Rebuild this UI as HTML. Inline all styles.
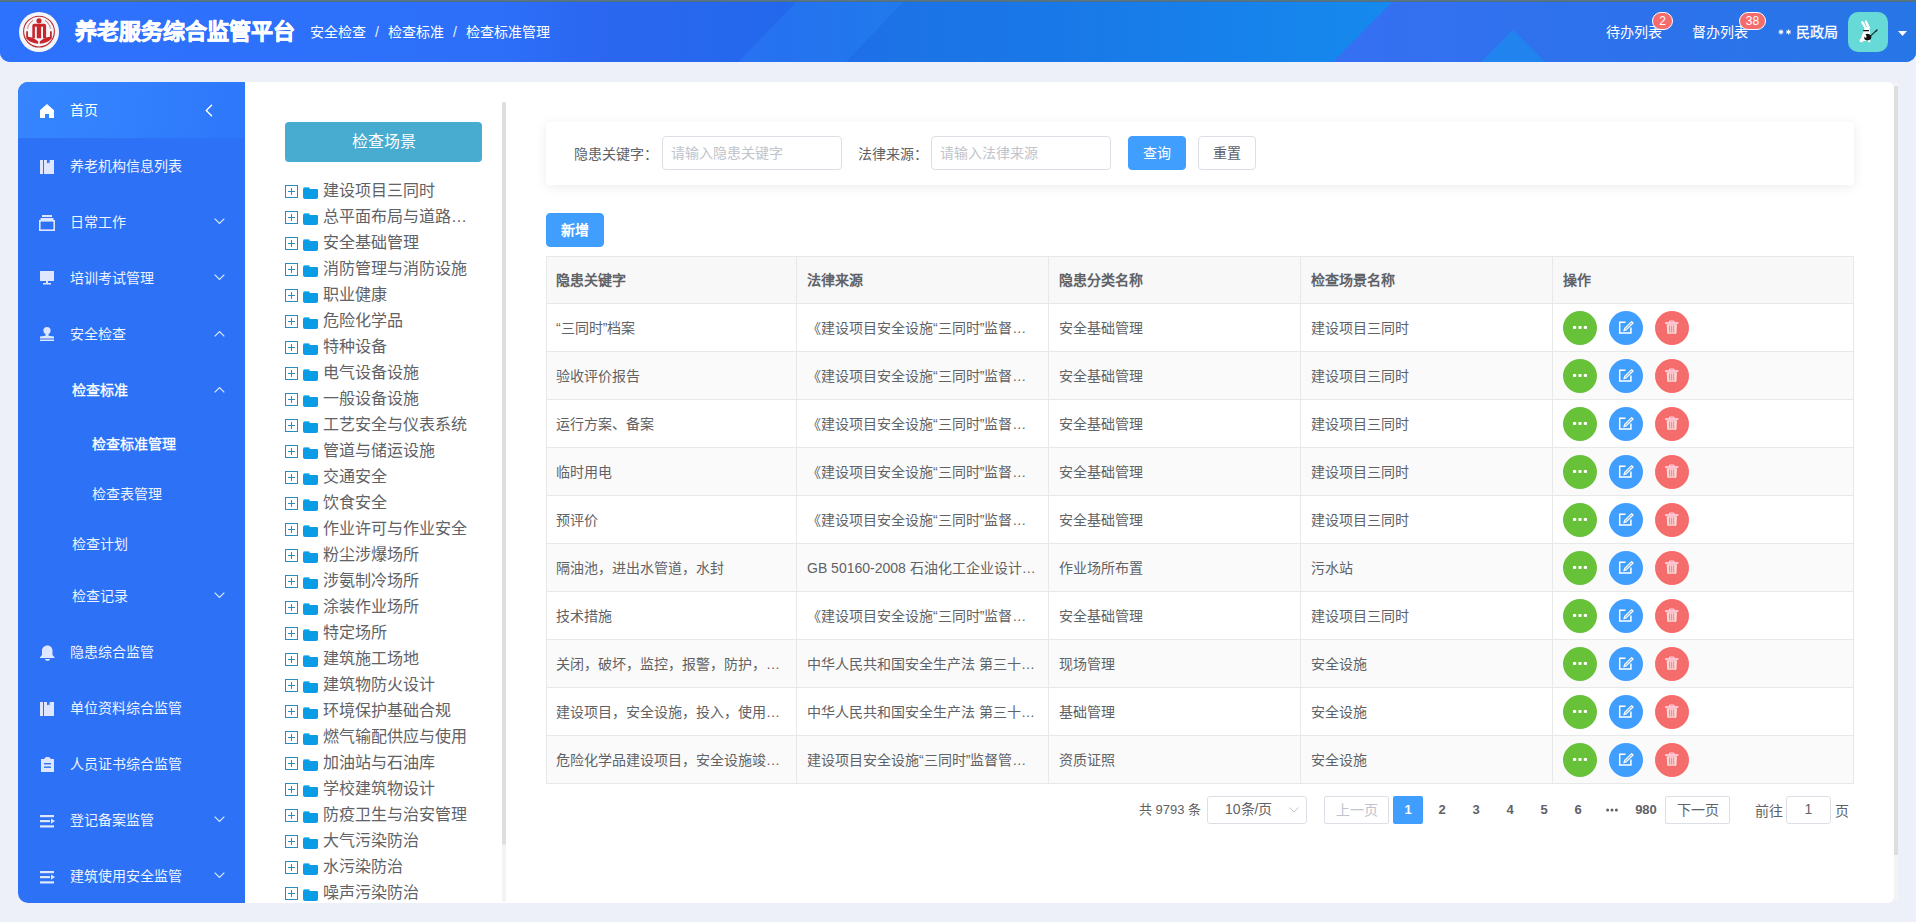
<!DOCTYPE html><html lang="zh-CN"><head><meta charset="utf-8"><style>*{box-sizing:border-box;margin:0;padding:0}
html,body{width:1916px;height:922px;overflow:hidden}
body{background:#edf0f8;font-family:"Liberation Sans",sans-serif;position:relative;color:#606266}
.abs{position:absolute}
#hdr{position:absolute;left:0;top:0;width:1916px;height:62px;border-radius:0 0 10px 10px;overflow:hidden;
 background:linear-gradient(90deg,#2d72fd 0px,#2c70fb 500px,#2169ee 800px,#1a82ea 1150px,#1c86ec 1300px,#2a73f4 1450px,#2d70f3 1916px)}
#topline{position:absolute;left:0;top:0;width:1916px;height:2px;background:linear-gradient(180deg,#5f7a78 0,#4a6a90 100%)}
#hdr .tri{position:absolute}
.logo{position:absolute;left:19px;top:12px;width:40px;height:40px}
.title{position:absolute;left:75px;top:17px;font-size:22px;line-height:30px;font-weight:bold;color:#fff;letter-spacing:0;-webkit-text-stroke:0.7px #fff}
.bc{position:absolute;top:23px;font-size:14px;line-height:18px;color:#fff}
.hr{position:absolute;top:23px;font-size:14px;line-height:18px;color:#fff}
.badge{position:absolute;height:18px;border-radius:9px;background:#f56c6c;border:1px solid #fff;color:#fff;font-size:12px;line-height:16px;text-align:center;padding:0 5px}
.avatar{position:absolute;left:1848px;top:12px;width:40px;height:40px;border-radius:10px;background:#67d9d6;overflow:hidden}
#side{position:absolute;left:18px;top:82px;width:227px;height:821px;background:#2d71f7;border-radius:10px 0 0 10px;overflow:hidden}
.mi{position:absolute;left:0;width:227px;color:#fff;font-size:14px}
.mi .tx{position:absolute;top:0;line-height:20px}
.home{background:linear-gradient(100deg,#3685ff 0%,#3280fd 50%,#2d77fb 100%)}
#panel{position:absolute;left:245px;top:82px;width:1649px;height:821px;background:#fff;border-radius:0 6px 6px 0}
.sb{position:absolute;background:#dedede;border-radius:2px}
.sbt{position:absolute;background:#f4f4f4}
.scene{position:absolute;left:285px;top:122px;width:197px;height:40px;border-radius:4px;background:#48abd0;color:#fff;font-size:16px;line-height:40px;text-align:center}
.tree{position:absolute;left:245px;top:82px;width:260px;height:821px;overflow:hidden}
.ti{position:absolute;left:0;height:26px;width:260px}
.ti .pl{position:absolute;left:40px;top:8px;width:13px;height:13px;border:1px solid #2a8cb8}
.ti .pl:before{content:"";position:absolute;left:2px;top:5px;width:7px;height:1px;background:#2a8cb8}
.ti .pl:after{content:"";position:absolute;left:5px;top:2px;width:1px;height:7px;background:#2a8cb8}
.ti .fd{position:absolute;left:58px;top:12px;width:15px;height:10px;background:#0a9de5;border-radius:0 1px 2px 2px}
.ti .fd:before{content:"";position:absolute;left:0;top:-2px;width:7px;height:3px;background:#0a9de5;border-radius:2px 2px 0 0;border-top:1px solid #5cc4f5}
.ti .tt{position:absolute;left:78px;top:3px;font-size:16px;line-height:22px;color:#606266;white-space:nowrap}
.card{position:absolute;left:546px;top:122px;width:1308px;height:63px;background:#fff;border-radius:4px;box-shadow:0 2px 12px 0 rgba(0,0,0,.08)}
.lbl{position:absolute;font-size:14px;line-height:20px;color:#606266}
.inp{position:absolute;height:34px;border:1px solid #dcdfe6;border-radius:4px;background:#fff;font-size:14px;color:#c0c4cc;line-height:32px;padding-left:8px}
.btn{position:absolute;height:34px;border-radius:4px;font-size:14px;line-height:32px;text-align:center}
.bp{background:#409eff;border:1px solid #409eff;color:#fff}
.bd{background:#fff;border:1px solid #dcdfe6;color:#606266}
.tbl{position:absolute;left:546px;top:256px;width:1308px;height:528px;border:1px solid #e8e8e8}
.th{position:absolute;left:546px;top:256px;width:1308px;height:48px;background:#f8f8f9;border:1px solid #e8e8e8;border-bottom:1px solid #e8e8e8}
.th div{position:absolute;top:13px;font-size:14px;line-height:20px;font-weight:bold;color:#606266}
.tr{position:absolute;left:546px;width:1308px;height:48px;border:1px solid #e8e8e8;border-top:none;background:#fff}
.tr.st{background:#fafafa}
.td{position:absolute;top:14px;font-size:14px;line-height:20px;color:#606266;white-space:nowrap}
.c0{left:9px}.c1{left:260px}.c2{left:512px}.c3{left:764px}
.vl{position:absolute;width:1px;background:#e8e8e8}
.ops{position:absolute;left:1016px;top:7px;height:34px}
.ob{position:absolute;top:0;width:34px;height:34px;border-radius:17px}
.ob.g{left:0;background:#67c23a}.ob.b{left:46px;background:#409eff}.ob.r{left:92px;background:#f56c6c}
.pg{position:absolute;font-size:13px;line-height:28px;color:#606266}
</style></head><body>
<div id="hdr">
 <svg class="tri" style="left:0;top:0" width="1916" height="62">
  <defs>
   <linearGradient id="g1" x1="0" x2="1916" y1="0" y2="0" gradientUnits="userSpaceOnUse">
    <stop offset="0" stop-color="#2d72fd"/><stop offset="0.26" stop-color="#2d6ff9"/><stop offset="0.31" stop-color="#2b67f0"/>
    <stop offset="0.41" stop-color="#2368ec"/><stop offset="0.47" stop-color="#1c73e6"/><stop offset="0.55" stop-color="#1978e7"/><stop offset="0.72" stop-color="#1589ee"/><stop offset="1" stop-color="#1589ee"/>
   </linearGradient>
   <linearGradient id="g2" x1="1333" x2="1916" y1="0" y2="0" gradientUnits="userSpaceOnUse">
    <stop offset="0" stop-color="#3570f2"/><stop offset="0.5" stop-color="#2d72ec"/><stop offset="1" stop-color="#2776e6"/>
   </linearGradient>
  </defs>
  <rect x="0" y="0" width="1916" height="62" fill="url(#g1)"/>
  <polygon points="798,0 905,0 846,62 738,62" fill="#2a8cf8" opacity="0.3"/>
  <polygon points="1394,0 1916,0 1916,62 1333,62" fill="url(#g2)"/>
  <polygon points="1513,30 1481,62 1545,62" fill="#2083ee"/>
 </svg>
</div>
<div id="topline"></div>
<svg class="abs" style="left:17px;top:10px" width="44" height="44" viewBox="0 0 44 44">
 <circle cx="22" cy="22" r="20" fill="#f5f6fa"/>
 <circle cx="22" cy="21.6" r="15.4" fill="none" stroke="#bd2a2e" stroke-width="1.1"/>
 <circle cx="22" cy="10.8" r="2.6" fill="#c8262b"/>
 <path d="M15.3 28.2V15.8Q15.3 13.8 17.3 13.8H27.1Q29.1 13.8 29.1 15.8V28.2H26V16.7H24.1V28.2H19.8V16.7H17.9V28.2Z" fill="#c8262b"/>
 <path d="M9.2 21.3H11V26.8Q17 27.3 21.2 31.6V33.8Q14 33.6 9.2 28.6Z" fill="#c8262b"/>
 <path d="M34.8 21.3H33V26.8Q27 27.3 22.8 31.6V33.8Q30 33.6 34.8 28.6Z" fill="#c8262b"/>
 <path d="M10.5 18.5Q12 13 16 10.5" fill="none" stroke="#b5373a" stroke-width="1.3" stroke-dasharray="0.7 0.6" opacity="0.8"/>
 <path d="M33.5 18.5Q32 13 28 10.5" fill="none" stroke="#b5373a" stroke-width="1.3" stroke-dasharray="0.7 0.6" opacity="0.8"/>
</svg>
<div class="title">养老服务综合监管平台</div>
<div class="bc" style="left:310px">安全检查</div>
<div class="bc" style="left:375px;color:#e6eeff">/</div>
<div class="bc" style="left:388px">检查标准</div>
<div class="bc" style="left:453px;color:#e6eeff">/</div>
<div class="bc" style="left:466px">检查标准管理</div>
<div class="hr" style="left:1606px">待办列表</div>
<div class="badge" style="left:1652px;top:12px;width:21px">2</div>
<div class="hr" style="left:1692px">督办列表</div>
<div class="badge" style="left:1739px;top:12px;width:27px">38</div>
<svg class="abs" style="left:1778px;top:29px" width="14" height="6" viewBox="0 0 14 6"><path d="M3 0.5v5M0.8 1.8l4.4 2.4M0.8 4.2l4.4-2.4M10.5 0.5v5M8.3 1.8l4.4 2.4M8.3 4.2l4.4-2.4" stroke="#fff" stroke-width="1.1"/></svg>
<div class="hr" style="left:1796px;-webkit-text-stroke:0.3px #fff">民政局</div>
<div class="avatar"><svg width="40" height="40" viewBox="0 0 40 40">
 <path d="M14.2 10.2L17.6 15.8M17.8 9.6L20.8 15.8" stroke="#fff" stroke-width="2.4" stroke-linecap="round" fill="none"/>
 <path d="M17 15Q21.2 14.6 21.8 18Q22.5 22 22 26L22.3 30.2L20.3 30.3L19.5 28.5L15.5 29L14 30.4L11.5 29.5Q11 27.5 13 26.5Q14.5 21.5 16 17.5Z" fill="#fff"/>
 <path d="M15.2 18.6H21" stroke="#111" stroke-width="1.2"/>
 <path d="M17.5 22.2Q20.5 21 23.2 23.5Q24 26.5 21.5 28Q18.5 29 16.6 27.6Q15.8 25.8 16.6 24.4Q17.5 26.5 18.6 25.2Q18.5 23.4 17.5 22.2Z" fill="#111"/>
 <path d="M23 23.6L29.2 17.8" stroke="#163c3c" stroke-width="1.3"/>
 <path d="M27 19.6L29.8 17L28.6 19.4z" fill="#111"/>
</svg></div>
<svg class="abs" style="left:1898px;top:31px" width="9" height="5"><path d="M0 0h9L4.5 5z" fill="#fff"/></svg>

<div id="side">
<div class="mi home" style="top:0;height:56px"></div>
<div class="mi" style="top:28px;height:0"><svg class="abs" style="left:22px;top:-6px" width="14" height="14" viewBox="0 0 14 14"><path d="M7 0L14 6.2V14H9V9.9H5V14H0V6.2z" fill="#fff"/></svg><div class="tx" style="left:52px;top:-10px;color:#fff">首页</div><svg class="abs" style="left:187px;top:-6px" width="8" height="13" viewBox="0 0 8 13"><path d="M7 0.7L1.3 6.5L7 12.3" fill="none" stroke="#fff" stroke-width="1.4"/></svg></div>
<div class="mi" style="top:84px;height:0"><svg class="abs" style="left:22px;top:-6px" width="14" height="14" viewBox="0 0 14 14"><rect x="0" y="0" width="3" height="14" fill="#dfe6ff"/><path d="M4 0h3v3.5l1.3-1 1.3 1V0H14v14H4z" fill="#dfe6ff"/></svg><div class="tx" style="left:52px;top:-10px;color:#eef3ff">养老机构信息列表</div></div>
<div class="mi" style="top:140px;height:0"><svg class="abs" style="left:21px;top:-7px" width="16" height="16" viewBox="0 0 16 16"><rect x="3" y="0" width="10" height="2" fill="#dfe6ff"/><rect x="1.5" y="3" width="13" height="2" fill="#dfe6ff"/><rect x="0.8" y="5.8" width="14.4" height="9.4" fill="none" stroke="#dfe6ff" stroke-width="1.6"/></svg><div class="tx" style="left:52px;top:-10px;color:#eef3ff">日常工作</div><svg class="abs" style="left:196px;top:-4px" width="11" height="7" viewBox="0 0 11 7"><path d="M0.7 0.7L5.5 5.5L10.3 0.7" fill="none" stroke="#dfe8ff" stroke-width="1.2"/></svg></div>
<div class="mi" style="top:196px;height:0"><svg class="abs" style="left:22px;top:-7px" width="14" height="14" viewBox="0 0 14 14"><rect x="0" y="0" width="14" height="10" fill="#dfe6ff"/><rect x="6" y="10" width="2" height="2" fill="#dfe6ff"/><rect x="3" y="12" width="8" height="1.5" fill="#dfe6ff"/></svg><div class="tx" style="left:52px;top:-10px;color:#eef3ff">培训考试管理</div><svg class="abs" style="left:196px;top:-4px" width="11" height="7" viewBox="0 0 11 7"><path d="M0.7 0.7L5.5 5.5L10.3 0.7" fill="none" stroke="#dfe8ff" stroke-width="1.2"/></svg></div>
<div class="mi" style="top:252px;height:0"><svg class="abs" style="left:22px;top:-7px" width="14" height="14" viewBox="0 0 14 14"><circle cx="7" cy="3.6" r="3.6" fill="#dfe6ff"/><path d="M5.5 6.5h3v2.2L14 9.5V11.5H0V9.5l5.5-0.8z" fill="#dfe6ff"/><rect x="0" y="12.5" width="14" height="1.5" fill="#dfe6ff"/></svg><div class="tx" style="left:52px;top:-10px;color:#eef3ff">安全检查</div><svg class="abs" style="left:196px;top:-4px" width="11" height="7" viewBox="0 0 11 7"><path d="M0.7 6.3L5.5 1.5L10.3 6.3" fill="none" stroke="#dfe8ff" stroke-width="1.2"/></svg></div>
<div class="mi" style="top:308px;height:0"><div class="tx" style="left:54px;top:-10px;-webkit-text-stroke:0.35px #fff;color:#fff">检查标准</div><svg class="abs" style="left:196px;top:-4px" width="11" height="7" viewBox="0 0 11 7"><path d="M0.7 6.3L5.5 1.5L10.3 6.3" fill="none" stroke="#dfe8ff" stroke-width="1.2"/></svg></div>
<div class="mi" style="top:362px;height:0"><div class="tx" style="left:74px;top:-10px;-webkit-text-stroke:0.35px #fff;color:#fff">检查标准管理</div></div>
<div class="mi" style="top:412px;height:0"><div class="tx" style="left:74px;top:-10px;color:#eef3ff">检查表管理</div></div>
<div class="mi" style="top:462px;height:0"><div class="tx" style="left:54px;top:-10px;color:#eef3ff">检查计划</div></div>
<div class="mi" style="top:514px;height:0"><div class="tx" style="left:54px;top:-10px;color:#eef3ff">检查记录</div><svg class="abs" style="left:196px;top:-4px" width="11" height="7" viewBox="0 0 11 7"><path d="M0.7 0.7L5.5 5.5L10.3 0.7" fill="none" stroke="#dfe8ff" stroke-width="1.2"/></svg></div>
<div class="mi" style="top:570px;height:0"><svg class="abs" style="left:22px;top:-7px" width="15" height="16" viewBox="0 0 15 16"><path d="M7.5 0.5c3 0 5 2.3 5 5.5v4l2 2.2v0.8H0v-0.8l2-2.2v-4c0-3.2 2-5.5 5.5-5.5z" fill="#dfe6ff"/><path d="M5 14h5c0 1-1 1.8-2.5 1.8S5 15 5 14z" fill="#dfe6ff"/></svg><div class="tx" style="left:52px;top:-10px;color:#eef3ff">隐患综合监管</div></div>
<div class="mi" style="top:626px;height:0"><svg class="abs" style="left:22px;top:-6px" width="14" height="14" viewBox="0 0 14 14"><rect x="0" y="0" width="3" height="14" fill="#dfe6ff"/><path d="M4 0h3v3.5l1.3-1 1.3 1V0H14v14H4z" fill="#dfe6ff"/></svg><div class="tx" style="left:52px;top:-10px;color:#eef3ff">单位资料综合监管</div></div>
<div class="mi" style="top:682px;height:0"><svg class="abs" style="left:23px;top:-7px" width="13" height="15" viewBox="0 0 13 15"><path d="M0 2h3.5V1h6v1H13v13H0z" fill="#dfe6ff"/><rect x="3" y="6" width="7" height="1.4" fill="#2d71f7"/><rect x="3" y="9.5" width="7" height="1.4" fill="#2d71f7"/><rect x="4.5" y="0" width="4" height="2.5" fill="#dfe6ff"/></svg><div class="tx" style="left:52px;top:-10px;color:#eef3ff">人员证书综合监管</div></div>
<div class="mi" style="top:738px;height:0"><svg class="abs" style="left:22px;top:-5px" width="15" height="13" viewBox="0 0 15 13"><rect x="0" y="0" width="14" height="2.2" fill="#dfe6ff"/><rect x="0" y="5" width="10" height="2.2" fill="#dfe6ff"/><path d="M11 3.5l4 2.6-4 2.6z" fill="#dfe6ff"/><rect x="0" y="10.3" width="14" height="2.2" fill="#dfe6ff"/></svg><div class="tx" style="left:52px;top:-10px;color:#eef3ff">登记备案监管</div><svg class="abs" style="left:196px;top:-4px" width="11" height="7" viewBox="0 0 11 7"><path d="M0.7 0.7L5.5 5.5L10.3 0.7" fill="none" stroke="#dfe8ff" stroke-width="1.2"/></svg></div>
<div class="mi" style="top:794px;height:0"><svg class="abs" style="left:22px;top:-5px" width="15" height="13" viewBox="0 0 15 13"><rect x="0" y="0" width="14" height="2.2" fill="#dfe6ff"/><rect x="0" y="5" width="10" height="2.2" fill="#dfe6ff"/><path d="M11 3.5l4 2.6-4 2.6z" fill="#dfe6ff"/><rect x="0" y="10.3" width="14" height="2.2" fill="#dfe6ff"/></svg><div class="tx" style="left:52px;top:-10px;color:#eef3ff">建筑使用安全监管</div><svg class="abs" style="left:196px;top:-4px" width="11" height="7" viewBox="0 0 11 7"><path d="M0.7 0.7L5.5 5.5L10.3 0.7" fill="none" stroke="#dfe8ff" stroke-width="1.2"/></svg></div>
</div>
<div id="panel"></div>
<div class="scene">检查场景</div>

<div class="sbt" style="left:502px;top:102px;width:4px;height:800px"></div><div class="sb" style="left:502px;top:102px;width:4px;height:743px"></div>
<div class="sbt" style="left:1894px;top:82px;width:4px;height:818px"></div>
<div class="sb" style="left:1894px;top:86px;width:4px;height:769px;border-radius:0"></div>
<div class="card">
 <div class="lbl" style="left:28px;top:22px">隐患关键字：</div>
 <div class="inp" style="left:116px;top:14px;width:180px">请输入隐患关键字</div>
 <div class="lbl" style="left:312px;top:22px">法律来源：</div>
 <div class="inp" style="left:385px;top:14px;width:180px">请输入法律来源</div>
 <div class="btn bp" style="left:582px;top:14px;width:58px">查询</div>
 <div class="btn bd" style="left:652px;top:14px;width:58px">重置</div>
</div>
<div class="btn bp" style="left:546px;top:213px;width:58px;font-weight:bold">新增</div>
<div class="th"><div style="left:9px">隐患关键字</div><div style="left:260px">法律来源</div><div style="left:512px">隐患分类名称</div><div style="left:764px">检查场景名称</div><div style="left:1016px">操作</div></div>

<div class="tree">
<div class="ti" style="top:95px"><span class="pl"></span><span class="fd"></span><span class="tt">建设项目三同时</span></div>
<div class="ti" style="top:121px"><span class="pl"></span><span class="fd"></span><span class="tt">总平面布局与道路…</span></div>
<div class="ti" style="top:147px"><span class="pl"></span><span class="fd"></span><span class="tt">安全基础管理</span></div>
<div class="ti" style="top:173px"><span class="pl"></span><span class="fd"></span><span class="tt">消防管理与消防设施</span></div>
<div class="ti" style="top:199px"><span class="pl"></span><span class="fd"></span><span class="tt">职业健康</span></div>
<div class="ti" style="top:225px"><span class="pl"></span><span class="fd"></span><span class="tt">危险化学品</span></div>
<div class="ti" style="top:251px"><span class="pl"></span><span class="fd"></span><span class="tt">特种设备</span></div>
<div class="ti" style="top:277px"><span class="pl"></span><span class="fd"></span><span class="tt">电气设备设施</span></div>
<div class="ti" style="top:303px"><span class="pl"></span><span class="fd"></span><span class="tt">一般设备设施</span></div>
<div class="ti" style="top:329px"><span class="pl"></span><span class="fd"></span><span class="tt">工艺安全与仪表系统</span></div>
<div class="ti" style="top:355px"><span class="pl"></span><span class="fd"></span><span class="tt">管道与储运设施</span></div>
<div class="ti" style="top:381px"><span class="pl"></span><span class="fd"></span><span class="tt">交通安全</span></div>
<div class="ti" style="top:407px"><span class="pl"></span><span class="fd"></span><span class="tt">饮食安全</span></div>
<div class="ti" style="top:433px"><span class="pl"></span><span class="fd"></span><span class="tt">作业许可与作业安全</span></div>
<div class="ti" style="top:459px"><span class="pl"></span><span class="fd"></span><span class="tt">粉尘涉爆场所</span></div>
<div class="ti" style="top:485px"><span class="pl"></span><span class="fd"></span><span class="tt">涉氨制冷场所</span></div>
<div class="ti" style="top:511px"><span class="pl"></span><span class="fd"></span><span class="tt">涂装作业场所</span></div>
<div class="ti" style="top:537px"><span class="pl"></span><span class="fd"></span><span class="tt">特定场所</span></div>
<div class="ti" style="top:563px"><span class="pl"></span><span class="fd"></span><span class="tt">建筑施工场地</span></div>
<div class="ti" style="top:589px"><span class="pl"></span><span class="fd"></span><span class="tt">建筑物防火设计</span></div>
<div class="ti" style="top:615px"><span class="pl"></span><span class="fd"></span><span class="tt">环境保护基础合规</span></div>
<div class="ti" style="top:641px"><span class="pl"></span><span class="fd"></span><span class="tt">燃气输配供应与使用</span></div>
<div class="ti" style="top:667px"><span class="pl"></span><span class="fd"></span><span class="tt">加油站与石油库</span></div>
<div class="ti" style="top:693px"><span class="pl"></span><span class="fd"></span><span class="tt">学校建筑物设计</span></div>
<div class="ti" style="top:719px"><span class="pl"></span><span class="fd"></span><span class="tt">防疫卫生与治安管理</span></div>
<div class="ti" style="top:745px"><span class="pl"></span><span class="fd"></span><span class="tt">大气污染防治</span></div>
<div class="ti" style="top:771px"><span class="pl"></span><span class="fd"></span><span class="tt">水污染防治</span></div>
<div class="ti" style="top:797px"><span class="pl"></span><span class="fd"></span><span class="tt">噪声污染防治</span></div>
</div>
<div class="tr" style="top:304px">
<div class="td c0">“三同时”档案</div>
<div class="td c1">《建设项目安全设施“三同时”监督…</div>
<div class="td c2">安全基础管理</div>
<div class="td c3">建设项目三同时</div>
<div class="ops"><span class="ob g"><svg width="34" height="34" viewBox="0 0 34 34"><rect x="10" y="15" width="3.2" height="3" rx="0.8" fill="#fff"/><rect x="15.4" y="15" width="3.2" height="3" rx="0.8" fill="#fff"/><rect x="20.8" y="15" width="3.2" height="3" rx="0.8" fill="#fff"/></svg></span><span class="ob b"><svg width="34" height="34" viewBox="0 0 34 34"><path d="M16.5 11.2H10.7V22H21.9V16.5" fill="none" stroke="#fff" stroke-width="1.5"/><path d="M22.6 10.6l1.4 1.4-6.9 6.9-2.2 0.8 0.8-2.2z" fill="none" stroke="#fff" stroke-width="1.2" stroke-linejoin="round"/></svg></span><span class="ob r"><svg width="34" height="34" viewBox="0 0 34 34"><rect x="10" y="11.2" width="13.4" height="1.6" fill="#fde" /><path d="M14.5 11.2v-1.2h4.4v1.2" fill="none" stroke="#fde" stroke-width="1"/><path d="M11.7 13.3h10.2l-0.5 9.5H12.2z" fill="#fcd8d8"/><rect x="14.2" y="14.6" width="1" height="7" fill="#f08080"/><rect x="16.2" y="14.6" width="1" height="7" fill="#f08080"/><rect x="18.2" y="14.6" width="1" height="7" fill="#f08080"/></svg></span></div>
</div>
<div class="tr st" style="top:352px">
<div class="td c0">验收评价报告</div>
<div class="td c1">《建设项目安全设施“三同时”监督…</div>
<div class="td c2">安全基础管理</div>
<div class="td c3">建设项目三同时</div>
<div class="ops"><span class="ob g"><svg width="34" height="34" viewBox="0 0 34 34"><rect x="10" y="15" width="3.2" height="3" rx="0.8" fill="#fff"/><rect x="15.4" y="15" width="3.2" height="3" rx="0.8" fill="#fff"/><rect x="20.8" y="15" width="3.2" height="3" rx="0.8" fill="#fff"/></svg></span><span class="ob b"><svg width="34" height="34" viewBox="0 0 34 34"><path d="M16.5 11.2H10.7V22H21.9V16.5" fill="none" stroke="#fff" stroke-width="1.5"/><path d="M22.6 10.6l1.4 1.4-6.9 6.9-2.2 0.8 0.8-2.2z" fill="none" stroke="#fff" stroke-width="1.2" stroke-linejoin="round"/></svg></span><span class="ob r"><svg width="34" height="34" viewBox="0 0 34 34"><rect x="10" y="11.2" width="13.4" height="1.6" fill="#fde" /><path d="M14.5 11.2v-1.2h4.4v1.2" fill="none" stroke="#fde" stroke-width="1"/><path d="M11.7 13.3h10.2l-0.5 9.5H12.2z" fill="#fcd8d8"/><rect x="14.2" y="14.6" width="1" height="7" fill="#f08080"/><rect x="16.2" y="14.6" width="1" height="7" fill="#f08080"/><rect x="18.2" y="14.6" width="1" height="7" fill="#f08080"/></svg></span></div>
</div>
<div class="tr" style="top:400px">
<div class="td c0">运行方案、备案</div>
<div class="td c1">《建设项目安全设施“三同时”监督…</div>
<div class="td c2">安全基础管理</div>
<div class="td c3">建设项目三同时</div>
<div class="ops"><span class="ob g"><svg width="34" height="34" viewBox="0 0 34 34"><rect x="10" y="15" width="3.2" height="3" rx="0.8" fill="#fff"/><rect x="15.4" y="15" width="3.2" height="3" rx="0.8" fill="#fff"/><rect x="20.8" y="15" width="3.2" height="3" rx="0.8" fill="#fff"/></svg></span><span class="ob b"><svg width="34" height="34" viewBox="0 0 34 34"><path d="M16.5 11.2H10.7V22H21.9V16.5" fill="none" stroke="#fff" stroke-width="1.5"/><path d="M22.6 10.6l1.4 1.4-6.9 6.9-2.2 0.8 0.8-2.2z" fill="none" stroke="#fff" stroke-width="1.2" stroke-linejoin="round"/></svg></span><span class="ob r"><svg width="34" height="34" viewBox="0 0 34 34"><rect x="10" y="11.2" width="13.4" height="1.6" fill="#fde" /><path d="M14.5 11.2v-1.2h4.4v1.2" fill="none" stroke="#fde" stroke-width="1"/><path d="M11.7 13.3h10.2l-0.5 9.5H12.2z" fill="#fcd8d8"/><rect x="14.2" y="14.6" width="1" height="7" fill="#f08080"/><rect x="16.2" y="14.6" width="1" height="7" fill="#f08080"/><rect x="18.2" y="14.6" width="1" height="7" fill="#f08080"/></svg></span></div>
</div>
<div class="tr st" style="top:448px">
<div class="td c0">临时用电</div>
<div class="td c1">《建设项目安全设施“三同时”监督…</div>
<div class="td c2">安全基础管理</div>
<div class="td c3">建设项目三同时</div>
<div class="ops"><span class="ob g"><svg width="34" height="34" viewBox="0 0 34 34"><rect x="10" y="15" width="3.2" height="3" rx="0.8" fill="#fff"/><rect x="15.4" y="15" width="3.2" height="3" rx="0.8" fill="#fff"/><rect x="20.8" y="15" width="3.2" height="3" rx="0.8" fill="#fff"/></svg></span><span class="ob b"><svg width="34" height="34" viewBox="0 0 34 34"><path d="M16.5 11.2H10.7V22H21.9V16.5" fill="none" stroke="#fff" stroke-width="1.5"/><path d="M22.6 10.6l1.4 1.4-6.9 6.9-2.2 0.8 0.8-2.2z" fill="none" stroke="#fff" stroke-width="1.2" stroke-linejoin="round"/></svg></span><span class="ob r"><svg width="34" height="34" viewBox="0 0 34 34"><rect x="10" y="11.2" width="13.4" height="1.6" fill="#fde" /><path d="M14.5 11.2v-1.2h4.4v1.2" fill="none" stroke="#fde" stroke-width="1"/><path d="M11.7 13.3h10.2l-0.5 9.5H12.2z" fill="#fcd8d8"/><rect x="14.2" y="14.6" width="1" height="7" fill="#f08080"/><rect x="16.2" y="14.6" width="1" height="7" fill="#f08080"/><rect x="18.2" y="14.6" width="1" height="7" fill="#f08080"/></svg></span></div>
</div>
<div class="tr" style="top:496px">
<div class="td c0">预评价</div>
<div class="td c1">《建设项目安全设施“三同时”监督…</div>
<div class="td c2">安全基础管理</div>
<div class="td c3">建设项目三同时</div>
<div class="ops"><span class="ob g"><svg width="34" height="34" viewBox="0 0 34 34"><rect x="10" y="15" width="3.2" height="3" rx="0.8" fill="#fff"/><rect x="15.4" y="15" width="3.2" height="3" rx="0.8" fill="#fff"/><rect x="20.8" y="15" width="3.2" height="3" rx="0.8" fill="#fff"/></svg></span><span class="ob b"><svg width="34" height="34" viewBox="0 0 34 34"><path d="M16.5 11.2H10.7V22H21.9V16.5" fill="none" stroke="#fff" stroke-width="1.5"/><path d="M22.6 10.6l1.4 1.4-6.9 6.9-2.2 0.8 0.8-2.2z" fill="none" stroke="#fff" stroke-width="1.2" stroke-linejoin="round"/></svg></span><span class="ob r"><svg width="34" height="34" viewBox="0 0 34 34"><rect x="10" y="11.2" width="13.4" height="1.6" fill="#fde" /><path d="M14.5 11.2v-1.2h4.4v1.2" fill="none" stroke="#fde" stroke-width="1"/><path d="M11.7 13.3h10.2l-0.5 9.5H12.2z" fill="#fcd8d8"/><rect x="14.2" y="14.6" width="1" height="7" fill="#f08080"/><rect x="16.2" y="14.6" width="1" height="7" fill="#f08080"/><rect x="18.2" y="14.6" width="1" height="7" fill="#f08080"/></svg></span></div>
</div>
<div class="tr st" style="top:544px">
<div class="td c0">隔油池，进出水管道，水封</div>
<div class="td c1">GB 50160-2008 石油化工企业设计…</div>
<div class="td c2">作业场所布置</div>
<div class="td c3">污水站</div>
<div class="ops"><span class="ob g"><svg width="34" height="34" viewBox="0 0 34 34"><rect x="10" y="15" width="3.2" height="3" rx="0.8" fill="#fff"/><rect x="15.4" y="15" width="3.2" height="3" rx="0.8" fill="#fff"/><rect x="20.8" y="15" width="3.2" height="3" rx="0.8" fill="#fff"/></svg></span><span class="ob b"><svg width="34" height="34" viewBox="0 0 34 34"><path d="M16.5 11.2H10.7V22H21.9V16.5" fill="none" stroke="#fff" stroke-width="1.5"/><path d="M22.6 10.6l1.4 1.4-6.9 6.9-2.2 0.8 0.8-2.2z" fill="none" stroke="#fff" stroke-width="1.2" stroke-linejoin="round"/></svg></span><span class="ob r"><svg width="34" height="34" viewBox="0 0 34 34"><rect x="10" y="11.2" width="13.4" height="1.6" fill="#fde" /><path d="M14.5 11.2v-1.2h4.4v1.2" fill="none" stroke="#fde" stroke-width="1"/><path d="M11.7 13.3h10.2l-0.5 9.5H12.2z" fill="#fcd8d8"/><rect x="14.2" y="14.6" width="1" height="7" fill="#f08080"/><rect x="16.2" y="14.6" width="1" height="7" fill="#f08080"/><rect x="18.2" y="14.6" width="1" height="7" fill="#f08080"/></svg></span></div>
</div>
<div class="tr" style="top:592px">
<div class="td c0">技术措施</div>
<div class="td c1">《建设项目安全设施“三同时”监督…</div>
<div class="td c2">安全基础管理</div>
<div class="td c3">建设项目三同时</div>
<div class="ops"><span class="ob g"><svg width="34" height="34" viewBox="0 0 34 34"><rect x="10" y="15" width="3.2" height="3" rx="0.8" fill="#fff"/><rect x="15.4" y="15" width="3.2" height="3" rx="0.8" fill="#fff"/><rect x="20.8" y="15" width="3.2" height="3" rx="0.8" fill="#fff"/></svg></span><span class="ob b"><svg width="34" height="34" viewBox="0 0 34 34"><path d="M16.5 11.2H10.7V22H21.9V16.5" fill="none" stroke="#fff" stroke-width="1.5"/><path d="M22.6 10.6l1.4 1.4-6.9 6.9-2.2 0.8 0.8-2.2z" fill="none" stroke="#fff" stroke-width="1.2" stroke-linejoin="round"/></svg></span><span class="ob r"><svg width="34" height="34" viewBox="0 0 34 34"><rect x="10" y="11.2" width="13.4" height="1.6" fill="#fde" /><path d="M14.5 11.2v-1.2h4.4v1.2" fill="none" stroke="#fde" stroke-width="1"/><path d="M11.7 13.3h10.2l-0.5 9.5H12.2z" fill="#fcd8d8"/><rect x="14.2" y="14.6" width="1" height="7" fill="#f08080"/><rect x="16.2" y="14.6" width="1" height="7" fill="#f08080"/><rect x="18.2" y="14.6" width="1" height="7" fill="#f08080"/></svg></span></div>
</div>
<div class="tr st" style="top:640px">
<div class="td c0">关闭，破坏，监控，报警，防护，…</div>
<div class="td c1">中华人民共和国安全生产法 第三十…</div>
<div class="td c2">现场管理</div>
<div class="td c3">安全设施</div>
<div class="ops"><span class="ob g"><svg width="34" height="34" viewBox="0 0 34 34"><rect x="10" y="15" width="3.2" height="3" rx="0.8" fill="#fff"/><rect x="15.4" y="15" width="3.2" height="3" rx="0.8" fill="#fff"/><rect x="20.8" y="15" width="3.2" height="3" rx="0.8" fill="#fff"/></svg></span><span class="ob b"><svg width="34" height="34" viewBox="0 0 34 34"><path d="M16.5 11.2H10.7V22H21.9V16.5" fill="none" stroke="#fff" stroke-width="1.5"/><path d="M22.6 10.6l1.4 1.4-6.9 6.9-2.2 0.8 0.8-2.2z" fill="none" stroke="#fff" stroke-width="1.2" stroke-linejoin="round"/></svg></span><span class="ob r"><svg width="34" height="34" viewBox="0 0 34 34"><rect x="10" y="11.2" width="13.4" height="1.6" fill="#fde" /><path d="M14.5 11.2v-1.2h4.4v1.2" fill="none" stroke="#fde" stroke-width="1"/><path d="M11.7 13.3h10.2l-0.5 9.5H12.2z" fill="#fcd8d8"/><rect x="14.2" y="14.6" width="1" height="7" fill="#f08080"/><rect x="16.2" y="14.6" width="1" height="7" fill="#f08080"/><rect x="18.2" y="14.6" width="1" height="7" fill="#f08080"/></svg></span></div>
</div>
<div class="tr" style="top:688px">
<div class="td c0">建设项目，安全设施，投入，使用…</div>
<div class="td c1">中华人民共和国安全生产法 第三十…</div>
<div class="td c2">基础管理</div>
<div class="td c3">安全设施</div>
<div class="ops"><span class="ob g"><svg width="34" height="34" viewBox="0 0 34 34"><rect x="10" y="15" width="3.2" height="3" rx="0.8" fill="#fff"/><rect x="15.4" y="15" width="3.2" height="3" rx="0.8" fill="#fff"/><rect x="20.8" y="15" width="3.2" height="3" rx="0.8" fill="#fff"/></svg></span><span class="ob b"><svg width="34" height="34" viewBox="0 0 34 34"><path d="M16.5 11.2H10.7V22H21.9V16.5" fill="none" stroke="#fff" stroke-width="1.5"/><path d="M22.6 10.6l1.4 1.4-6.9 6.9-2.2 0.8 0.8-2.2z" fill="none" stroke="#fff" stroke-width="1.2" stroke-linejoin="round"/></svg></span><span class="ob r"><svg width="34" height="34" viewBox="0 0 34 34"><rect x="10" y="11.2" width="13.4" height="1.6" fill="#fde" /><path d="M14.5 11.2v-1.2h4.4v1.2" fill="none" stroke="#fde" stroke-width="1"/><path d="M11.7 13.3h10.2l-0.5 9.5H12.2z" fill="#fcd8d8"/><rect x="14.2" y="14.6" width="1" height="7" fill="#f08080"/><rect x="16.2" y="14.6" width="1" height="7" fill="#f08080"/><rect x="18.2" y="14.6" width="1" height="7" fill="#f08080"/></svg></span></div>
</div>
<div class="tr st" style="top:736px">
<div class="td c0">危险化学品建设项目，安全设施竣…</div>
<div class="td c1">建设项目安全设施“三同时”监督管…</div>
<div class="td c2">资质证照</div>
<div class="td c3">安全设施</div>
<div class="ops"><span class="ob g"><svg width="34" height="34" viewBox="0 0 34 34"><rect x="10" y="15" width="3.2" height="3" rx="0.8" fill="#fff"/><rect x="15.4" y="15" width="3.2" height="3" rx="0.8" fill="#fff"/><rect x="20.8" y="15" width="3.2" height="3" rx="0.8" fill="#fff"/></svg></span><span class="ob b"><svg width="34" height="34" viewBox="0 0 34 34"><path d="M16.5 11.2H10.7V22H21.9V16.5" fill="none" stroke="#fff" stroke-width="1.5"/><path d="M22.6 10.6l1.4 1.4-6.9 6.9-2.2 0.8 0.8-2.2z" fill="none" stroke="#fff" stroke-width="1.2" stroke-linejoin="round"/></svg></span><span class="ob r"><svg width="34" height="34" viewBox="0 0 34 34"><rect x="10" y="11.2" width="13.4" height="1.6" fill="#fde" /><path d="M14.5 11.2v-1.2h4.4v1.2" fill="none" stroke="#fde" stroke-width="1"/><path d="M11.7 13.3h10.2l-0.5 9.5H12.2z" fill="#fcd8d8"/><rect x="14.2" y="14.6" width="1" height="7" fill="#f08080"/><rect x="16.2" y="14.6" width="1" height="7" fill="#f08080"/><rect x="18.2" y="14.6" width="1" height="7" fill="#f08080"/></svg></span></div>
</div>
<div class="vl" style="left:796px;top:256px;height:528px"></div><div class="vl" style="left:1048px;top:256px;height:528px"></div><div class="vl" style="left:1300px;top:256px;height:528px"></div><div class="vl" style="left:1552px;top:256px;height:528px"></div>
<div class="pg" style="left:1139px;top:796px">共 9793 条</div>
<div class="abs" style="left:1207px;top:796px;width:100px;height:28px;border:1px solid #dcdfe6;border-radius:3px;font-size:14px;line-height:25px;color:#606266;padding-left:17px">10条/页<svg class="abs" style="left:81px;top:10px" width="10" height="6" viewBox="0 0 10 6"><path d="M0.5 0.5L5 5L9.5 0.5" fill="none" stroke="#c0c4cc" stroke-width="1"/></svg></div>
<div class="abs" style="left:1324px;top:796px;width:65px;height:28px;border:1px solid #dcdfe6;border-radius:2px;font-size:14px;line-height:26px;color:#c0c4cc;text-align:center">上一页</div>
<div class="abs" style="left:1393px;top:796px;width:30px;height:28px;background:#409eff;border-radius:2px;font-size:13px;line-height:28px;color:#fff;text-align:center;font-weight:bold">1</div>
<div class="abs" style="left:1422px;top:796px;width:40px;height:28px;font-size:13px;line-height:28px;color:#606266;text-align:center;font-weight:bold">2</div><div class="abs" style="left:1456px;top:796px;width:40px;height:28px;font-size:13px;line-height:28px;color:#606266;text-align:center;font-weight:bold">3</div><div class="abs" style="left:1490px;top:796px;width:40px;height:28px;font-size:13px;line-height:28px;color:#606266;text-align:center;font-weight:bold">4</div><div class="abs" style="left:1524px;top:796px;width:40px;height:28px;font-size:13px;line-height:28px;color:#606266;text-align:center;font-weight:bold">5</div><div class="abs" style="left:1558px;top:796px;width:40px;height:28px;font-size:13px;line-height:28px;color:#606266;text-align:center;font-weight:bold">6</div><div class="abs" style="left:1626px;top:796px;width:40px;height:28px;font-size:13px;line-height:28px;color:#606266;text-align:center;font-weight:bold">980</div>
<svg class="abs" style="left:1606px;top:808px" width="12" height="4" viewBox="0 0 12 4"><circle cx="1.6" cy="2" r="1.5" fill="#606266"/><circle cx="6" cy="2" r="1.5" fill="#606266"/><circle cx="10.4" cy="2" r="1.5" fill="#606266"/></svg>
<div class="abs" style="left:1665px;top:796px;width:65px;height:28px;border:1px solid #dcdfe6;border-radius:2px;font-size:14px;line-height:26px;color:#606266;text-align:center">下一页</div>
<div class="pg" style="left:1755px;top:797px;font-size:14px">前往</div>
<div class="abs" style="left:1786px;top:796px;width:45px;height:28px;border:1px solid #dcdfe6;border-radius:3px;font-size:14px;line-height:25px;color:#606266;text-align:center">1</div>
<div class="pg" style="left:1835px;top:797px;font-size:14px">页</div>
</body></html>
